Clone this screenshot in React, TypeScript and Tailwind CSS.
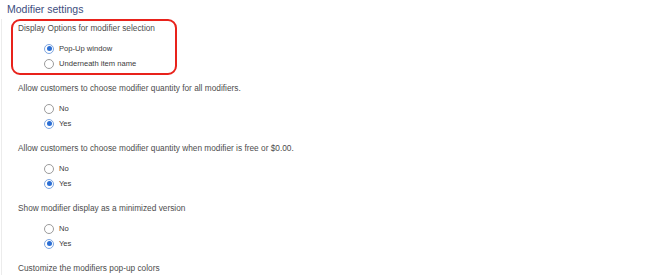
import React from 'react';

type Option = { label: string; checked: boolean };

const Radio: React.FC<Option> = ({ label, checked }) => (
  <div className="h-[15px] flex items-center pl-[26px]">
    {checked ? (
      <span className="w-[10px] h-[10px] rounded-full border border-[#7ea6e0] bg-white flex items-center justify-center">
        <span className="w-[5px] h-[5px] rounded-full bg-[#2c6fd4]" />
      </span>
    ) : (
      <span className="w-[10px] h-[10px] rounded-full border border-[#9b9b9b] bg-white" />
    )}
    <span className="ml-[5px] text-[7.6px] text-[#3a3a3a]">{label}</span>
  </div>
);

const Section: React.FC<{ title: string; options: Option[] }> = ({ title, options }) => (
  <div className="pt-[5px] pb-[5px]">
    <div className="h-[15px] flex items-center text-[8.3px] text-[#4d4d4d]">{title}</div>
    <div className="mt-[5px]">
      {options.map(o => (
        <Radio key={o.label} {...o} />
      ))}
    </div>
  </div>
);

const yesNo: Option[] = [
  { label: 'No', checked: false },
  { label: 'Yes', checked: true },
];

export default function App() {
  return (
    <div
      className="w-[670px] h-[275px] bg-white overflow-hidden"
      style={{ fontFamily: '"Liberation Sans", Arial, sans-serif' }}
    >
      <div className="h-[19px] pt-[1px] flex items-center pl-[7px] text-[10.5px] text-[#3d4d7e]">
        Modifier settings
      </div>
      <div className="ml-[1px] border-l border-[#ececec] h-[256px] pl-[16px]">
        <div className="-ml-[7px] w-[166px] border-2 border-[#e8221b] rounded-[9px] pl-[5px] pt-[1px] pb-[2px]">
          <div className="h-[13px] flex items-center text-[8.3px] text-[#4d4d4d]">
            Display Options for modifier selection
          </div>
          <div className="mt-[6px]">
            <Radio label="Pop-Up window" checked />
            <Radio label="Underneath item name" checked={false} />
          </div>
        </div>
        <div className="pt-[1px]">
          <Section title="Allow customers to choose modifier quantity for all modifiers." options={yesNo} />
          <Section
            title="Allow customers to choose modifier quantity when modifier is free or $0.00."
            options={yesNo}
          />
          <Section title="Show modifier display as a minimized version" options={yesNo} />
          <div className="pt-[5px] h-[20px] flex items-center text-[8.3px] text-[#4d4d4d]">
            Customize the modifiers pop-up colors
          </div>
        </div>
      </div>
    </div>
  );
}
